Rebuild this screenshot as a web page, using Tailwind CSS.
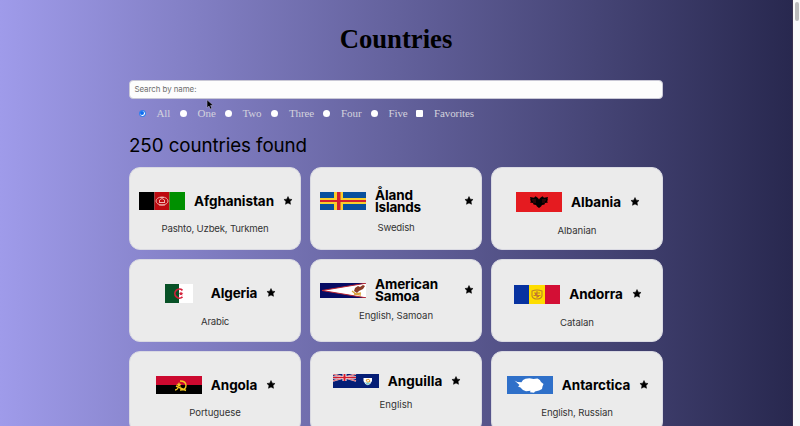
<!DOCTYPE html>
<html lang="en">
<head>
<meta charset="utf-8">
<title>Countries</title>
<script src="https://cdn.jsdelivr.net/npm/@tailwindcss/browser@4"></script>
</head>
<body class="h-[426px] overflow-hidden flex font-['Inter',sans-serif] text-black">
<svg class="hidden"><symbol id="star" viewBox="-1 0 22 22"><path d="M10 1.2l2.7 5.7 6.2.8-4.5 4.3 1.1 6.2L10 15.200l-5.500 3 1.100-6.200L1.100 7.700l6.200-.8z" stroke="#000" stroke-width="1.200" stroke-linejoin="round"/></symbol></svg>
<main class="w-[793px] h-[426px] shrink-0 bg-[linear-gradient(90deg,#9f9bea,#28284f)] border-r border-[#39304f]">
  <h1 class="pt-[23px] text-center font-['Liberation_Serif',serif] font-bold text-[26.7px] leading-[32px]">Countries</h1>
  <div class="ml-[129px] w-[535px]">
    <div class="mt-[25px] ml-[0.4px] h-[19px] w-[534px] rounded-[4px] bg-[#fdfdfd] border border-[#c9c8d6] px-[4px] flex items-center text-[7.9px] text-[#6e6e6e]"><span data-w="62" class="whitespace-nowrap">Search by name:</span></div>
    <div class="mt-[6px] pl-[9.500px] h-[16px] flex items-center font-['Liberation_Serif',serif] text-[11px] text-[#d3d2dd] whitespace-nowrap">
      <label class="w-[41px] flex items-center gap-[11px]"><i class="size-[7px] shrink-0 rounded-full bg-white border border-[#0b6cf0] flex items-center justify-center"><i class="size-[4.500px] shrink-0 rounded-full bg-[#0b6cf0]"></i></i><span data-w="13.500">All</span></label>
      <label class="w-[45px] flex items-center gap-[11px]"><i class="size-[7px] shrink-0 rounded-full bg-white"></i><span data-w="18.500">One</span></label>
      <label class="w-[46.500px] flex items-center gap-[11px]"><i class="size-[7px] shrink-0 rounded-full bg-white"></i><span data-w="19">Two</span></label>
      <label class="w-[52px] flex items-center gap-[11px]"><i class="size-[7px] shrink-0 rounded-full bg-white"></i><span data-w="25">Three</span></label>
      <label class="w-[47.500px] flex items-center gap-[11px]"><i class="size-[7px] shrink-0 rounded-full bg-white"></i><span data-w="20.500">Four</span></label>
      <label class="w-[45.500px] flex items-center gap-[11px]"><i class="size-[7px] shrink-0 rounded-full bg-white"></i><span data-w="19">Five</span></label>
      <label class="flex items-center gap-[11px]"><i class="size-[7px] shrink-0 rounded-[1px] bg-white"></i><span data-w="40">Favorites</span></label>
    </div>
    <h2 class="mt-[12px] h-[26px] text-[18.800px] leading-[25px] whitespace-nowrap"><span data-w="178">250 countries found</span></h2>
    <div class="mt-[8.400px] grid grid-cols-[172px_172px_172px] gap-x-[9px] gap-y-[9.200px] auto-rows-[82.500px]">

      <article class="rounded-[11px] bg-[#ebebeb] border border-[#d9d9e2] flex flex-col items-center pt-[21px]">
        <div class="h-[24px] pl-[2px] flex items-center gap-[9px]">
          <svg class="w-[46px] h-[18px] shrink-0" viewBox="0 0 46 18"><path d="M0 0h15.500v18H0z"/><path fill="#be0a10" d="M15.500 0h15v18h-15z"/><path fill="#009000" d="M30.500 0H46v18H30.500z"/><g fill="none" stroke="#f1bcb8" stroke-width=".9"><ellipse cx="23" cy="9" rx="6" ry="4"/><path d="M20 10.500h6M20.500 8q2.500-3 5 0v2.500h-5zM21 5.500h4M20 13h6"/></g></svg>
          <h3 class="w-[80px] font-bold text-[13.500px] leading-[12.500px] whitespace-nowrap"><span data-w="80">Afghanistan</span></h3>
          <svg class="size-[10px]"><use href="#star"/></svg>
        </div>
        <p class="mt-[9px] h-[13px] text-[9.600px] leading-[13px] text-[#333] whitespace-nowrap"><span data-w="107">Pashto, Uzbek, Turkmen</span></p>
      </article>

      <article class="rounded-[11px] bg-[#ebebeb] border border-[#d9d9e2] flex flex-col items-center pt-[21px]">
        <div class="h-[24px] pl-[2px] flex items-center gap-[9px]">
          <svg class="w-[46px] h-[18px] shrink-0" viewBox="0 0 46 18"><path fill="#08509e" d="M0 0h46v18H0z"/><path fill="#f8cf2b" d="M14 0h9v18h-9zM0 6h46v6H0z"/><path fill="#d31e30" d="M17 0h3.500v18H17zM0 8h46v2H0z"/></svg>
          <h3 class="w-[80px] font-bold text-[13.500px] leading-[12.500px] whitespace-nowrap"><span data-w="38">Åland</span><br><span data-w="46">Islands</span></h3>
          <svg class="size-[10px]"><use href="#star"/></svg>
        </div>
        <p class="mt-[8px] h-[13px] text-[9.600px] leading-[13px] text-[#333] whitespace-nowrap"><span data-w="37">Swedish</span></p>
      </article>

      <article class="rounded-[11px] bg-[#ebebeb] border border-[#d9d9e2] flex flex-col items-center pt-[22px]">
        <div class="h-[24px] pl-[2px] flex items-center gap-[9px]">
          <svg class="w-[46px] h-[20px] shrink-0" viewBox="0 0 46 20"><path fill="#e51b20" d="M0 0h46v20H0z"/><path d="M14 5l4 .8 1.500-1.600 2.500 1.800 1 1.500 1-1.500 2.500-1.800L28 5.800l4-.8-.5 2 .5 1-1 1 1 1.500-3 .5-.5 1.500-2.500.5-1 1.500-2 1.500-2-1.500-1-1.500-2.500-.5-.5-1.500-3-.5 1-1.500-1-1 .5-1z"/><path stroke="#8d1215" stroke-width=".6" d="M16 8h4m6 0h4M17 10h3m6 0h3"/></svg>
          <h3 class="font-bold text-[13.500px] leading-[12.500px] whitespace-nowrap"><span data-w="50">Albania</span></h3>
          <svg class="size-[10px]"><use href="#star"/></svg>
        </div>
        <p class="mt-[10px] h-[13px] text-[9.600px] leading-[13px] text-[#333] whitespace-nowrap"><span data-w="39">Albanian</span></p>
      </article>

      <article class="rounded-[11px] bg-[#ebebeb] border border-[#d9d9e2] flex flex-col items-center pt-[21px]">
        <div class="h-[24px] pl-[2px] flex items-center gap-[9px]">
          <svg class="w-[46px] h-[19px] shrink-0" viewBox="0 0 46 19"><path fill="#075126" d="M9 0h14v19H9z"/><path fill="#fff" d="M23 0h14v19H23z"/><path fill="none" stroke="#d4203a" stroke-width="1.700" d="M26.500 6.300a4.500 4.500 0 1 0 0 6.500"/><path fill="#d4203a" d="M25 7.500l.7 1.300 1.700.2-1.300 1 .4 1.600-1.500-.8-1.500.8.4-1.600-1.300-1 1.700-.2z"/></svg>
          <h3 class="font-bold text-[13.500px] leading-[12.500px] whitespace-nowrap"><span data-w="46.500">Algeria</span></h3>
          <svg class="size-[10px]"><use href="#star"/></svg>
        </div>
        <p class="mt-[9.500px] h-[13px] text-[9.600px] leading-[13px] text-[#333] whitespace-nowrap"><span data-w="28">Arabic</span></p>
      </article>

      <article class="rounded-[11px] bg-[#ebebeb] border border-[#d9d9e2] flex flex-col items-center pt-[18px]">
        <div class="h-[24px] pl-[2px] flex items-center gap-[9px]">
          <svg class="w-[46px] h-[15px] shrink-0" viewBox="0 0 46 15"><path fill="#060b63" d="M0 0h46v15H0z"/><path fill="#fff" stroke="#ba2330" stroke-width="1" d="M47 0L2 7.500 47 15z"/><path fill="#8a3b25" d="M35 5l3-2 2 1 3-2 2 1-2 3-4 2-2 2-3-2z"/><path fill="none" stroke="#d8a238" stroke-width="1.300" d="M32 8l4 3 5-1m-7 1 7 1"/></svg>
          <h3 class="w-[80px] font-bold text-[13.500px] leading-[12.500px] whitespace-nowrap"><span data-w="63">American</span><br><span data-w="44.500">Samoa</span></h3>
          <svg class="size-[10px]"><use href="#star"/></svg>
        </div>
        <p class="mt-[6.500px] h-[13px] text-[9.600px] leading-[13px] text-[#333] whitespace-nowrap"><span data-w="74">English, Samoan</span></p>
      </article>

      <article class="rounded-[11px] bg-[#ebebeb] border border-[#d9d9e2] flex flex-col items-center pt-[22px]">
        <div class="h-[24px] pl-[2px] flex items-center gap-[9px]">
          <svg class="w-[46px] h-[19px] shrink-0" viewBox="0 0 46 19"><path fill="#0732a0" d="M0 0h15v19H0z"/><path fill="#fedd00" d="M15 0h16v19H15z"/><path fill="#d30f35" d="M31 0h15v19H31z"/><g fill="none" stroke="#bd8428" stroke-width="1.100"><path d="M18 6q5-2 10 0v5q-1 3-5 3t-5-3zM20 8h6M19.500 10.500h7M23 6v7"/></g><path fill="#c8742f" d="M21 8h2v2h-2zm2 2h2v2h-2z"/></svg>
          <h3 class="font-bold text-[13.500px] leading-[12.500px] whitespace-nowrap"><span data-w="53.500">Andorra</span></h3>
          <svg class="size-[10px]"><use href="#star"/></svg>
        </div>
        <p class="mt-[9.500px] h-[13px] text-[9.600px] leading-[13px] text-[#333] whitespace-nowrap"><span data-w="34">Catalan</span></p>
      </article>

      <article class="rounded-[11px] bg-[#ebebeb] border border-[#d9d9e2] flex flex-col items-center pt-[21px]">
        <div class="h-[24px] pl-[2px] flex items-center gap-[9px]">
          <svg class="w-[46px] h-[18px] shrink-0" viewBox="0 0 46 18"><path fill="#cc092f" d="M0 0h46v9H0z"/><path d="M0 9h46v9H0z"/><g fill="none" stroke="#f3c91f" stroke-width="1.400"><path d="M24 5q6 0 6 4.500T24 14M20 10l10 4.500M19 14q2 0 3-2"/></g><path fill="#f3c91f" d="M23 6l.8 1.700 1.900.2-1.400 1.200.4 1.900-1.700-1-1.700 1 .4-1.900-1.400-1.200 1.900-.2z"/></svg>
          <h3 class="font-bold text-[13.500px] leading-[12.500px] whitespace-nowrap"><span data-w="46.500">Angola</span></h3>
          <svg class="size-[10px]"><use href="#star"/></svg>
        </div>
        <p class="mt-[9px] h-[13px] text-[9.600px] leading-[13px] text-[#333] whitespace-nowrap"><span data-w="51.500">Portuguese</span></p>
      </article>

      <article class="rounded-[11px] bg-[#ebebeb] border border-[#d9d9e2] flex flex-col items-center pt-[17px]">
        <div class="h-[24px] pl-[2px] flex items-center gap-[9px]">
          <svg class="w-[46px] h-[14px] shrink-0" viewBox="0 0 46 14"><path fill="#051e76" d="M0 0h46v14H0z"/><path stroke="#f5dede" stroke-width="1.700" d="M0 0l23 7M23 0L0 7"/><path stroke="#d23945" stroke-width=".7" d="M0 0l23 7M23 0L0 7"/><path fill="#fff" d="M9.500 0h4v7h-4zM0 2.200h23v2.600H0z"/><path fill="#d3192b" d="M10.500 0h2v7h-2zM0 2.800h23v1.400H0z"/><path fill="#fff" d="M30.500 4h8.500v3q-1 3-4.250 4.200Q31.500 10 30.500 7z"/><path fill="#72c8d8" d="M31.700 8.500h6.100q-1 1.500-3 2.400-2-.9-3.100-2.400z"/><path fill="none" stroke="#e5a02e" stroke-width="1" d="M33 6l3-.7 1 2-2.500 1z"/></svg>
          <h3 class="font-bold text-[13.500px] leading-[12.500px] whitespace-nowrap"><span data-w="54.500">Anguilla</span></h3>
          <svg class="size-[10px]"><use href="#star"/></svg>
        </div>
        <p class="mt-[5px] h-[13px] text-[9.600px] leading-[13px] text-[#333] whitespace-nowrap"><span data-w="33">English</span></p>
      </article>

      <article class="rounded-[11px] bg-[#ebebeb] border border-[#d9d9e2] flex flex-col items-center pt-[21px]">
        <div class="h-[24px] pl-[2px] flex items-center gap-[9px]">
          <svg class="w-[46px] h-[18px] shrink-0" viewBox="0 0 46 18"><path fill="#2f70c9" d="M0 0h46v18H0z"/><path fill="#fff" d="M7.500 4.500l3 1.500 4 .3q1-2.800 4-3.600l4-.5 4 .8 4-.6q3 1 3.500 3.600l2.500 2-1 2.500-.5 2.500-3 1.500-4 1-1 1.200-4-.4.500-1.500-4.500.5-3-1.300-2.500-2.500-2.500-1 1.500-1.500z"/></svg>
          <h3 class="font-bold text-[13.500px] leading-[12.500px] whitespace-nowrap"><span data-w="68.500">Antarctica</span></h3>
          <svg class="size-[10px]"><use href="#star"/></svg>
        </div>
        <p class="mt-[9px] h-[13px] text-[9.600px] leading-[13px] text-[#333] whitespace-nowrap"><span data-w="71.500">English, Russian</span></p>
      </article>
    </div>
  </div>
</main>
<aside class="grow h-[426px] bg-[#fafafa] pt-[2px] pl-[2px]"><div class="w-[4px] h-[19px] rounded-full bg-[#bdbdbd]"></div></aside>
<svg class="absolute left-[206px] top-[99px] w-[8px] h-[11px]" viewBox="0 0 8 11"><path d="M1 .8v8l2-1.700 1.200 2.900 1.700-.7-1.300-2.800 2.600-.2z" fill="#000" stroke="#aaa6ce" stroke-width=".6"/></svg>
<script>
function fit() {
  document.querySelectorAll('[data-w]').forEach(s => {
    s.style.display = 'inline-block';
    s.style.letterSpacing = '0px';
    const diff = +s.dataset.w - s.getBoundingClientRect().width;
    s.style.letterSpacing = (diff / s.textContent.length) + 'px';
  });
}
window.addEventListener('load', () => { fit(); requestAnimationFrame(fit); });
</script>
</body>
</html>
